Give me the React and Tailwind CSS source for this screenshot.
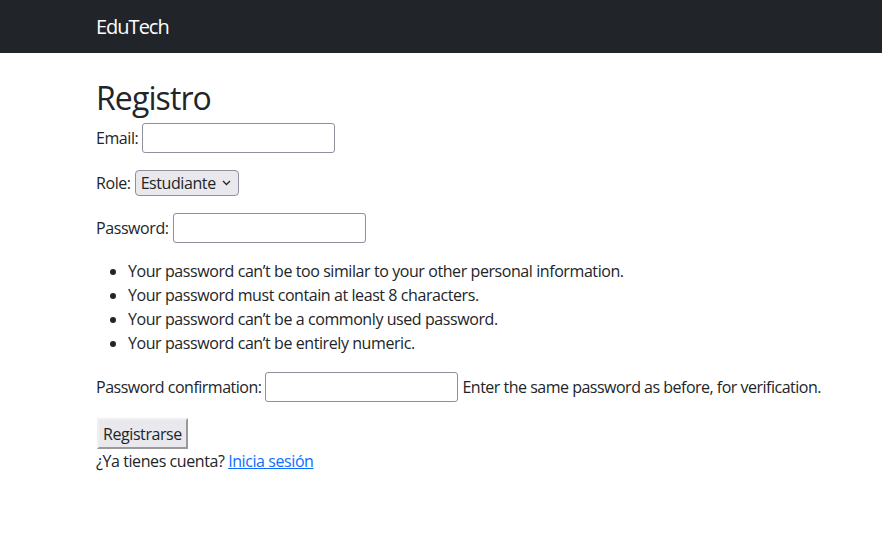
import React from 'react';

const HELP = [
  'Your password can’t be too similar to your other personal information.',
  'Your password must contain at least 8 characters.',
  'Your password can’t be a commonly used password.',
  'Your password can’t be entirely numeric.',
];

const inputCls = 'shrink-0 w-[193px] h-[30px] border border-[#8f8f9d] rounded-[3px] bg-white px-1';
const rowCls = 'flex items-center gap-[4px] whitespace-nowrap mb-4';

export default function App() {
  return (
    <div className="min-h-[537px] bg-white text-[#212529] text-[16px] leading-6 tracking-[-0.42px] font-['Open_Sans',sans-serif]">
      <nav className="h-[53px] bg-[#212529] flex items-center">
        <div className="w-[720px] mx-auto px-[15px]">
          <span className="text-white text-[20px] leading-[30px] tracking-[-1px]">EduTech</span>
        </div>
      </nav>

      <div className="w-[720px] mx-auto px-[15px] mt-6">
        <h2 className="text-[32px] leading-[38px] pt-[2px] font-normal tracking-[-0.9px] mb-[6px]">Registro</h2>
        <form>
          <p className={`${rowCls} h-[30px]`}>
            <label>Email:</label>
            <input type="email" className={inputCls} />
          </p>
          <p className={`${rowCls} h-[28px]`}>
            <label>Role:</label>
            <span className="inline-flex items-center h-[26px] border border-[#8f8f9d] rounded-[4px] bg-[#e9e9ed] pl-[5px] pr-[7px] gap-[6px]">
              <span>Estudiante</span>
              <svg width="9" height="6" viewBox="0 0 9 6" fill="none" stroke="#212529" strokeWidth="1.3">
                <path d="M1 1l3.5 3.5L8 1" />
              </svg>
            </span>
          </p>
          <p className={`${rowCls} h-[30px]`}>
            <label>Password:</label>
            <input type="password" className={inputCls} />
          </p>
          <ul className="list-disc pl-8 mb-[17px]">
            {HELP.map((t) => (
              <li key={t}>{t}</li>
            ))}
          </ul>
          <p className={`${rowCls} h-[30px] tracking-[-0.5px]`}>
            <label className="shrink-0">Password confirmation:</label>
            <input type="password" className={inputCls} />
            <span className="shrink-0">Enter the same password as before, for verification.</span>
          </p>
          <button
            type="button"
            className="block h-[31px] px-[4px] ml-[1px] bg-[#e9e9ed] border-2 border-t-[#f0f0f0] border-l-[#f0f0f0] border-r-[#9a9a9a] border-b-[#9a9a9a]"
          >
            Registrarse
          </button>
        </form>
        <p>
          ¿Ya tienes cuenta? <a href="#" className="text-[#0d6efd] underline">Inicia sesión</a>
        </p>
      </div>
    </div>
  );
}
